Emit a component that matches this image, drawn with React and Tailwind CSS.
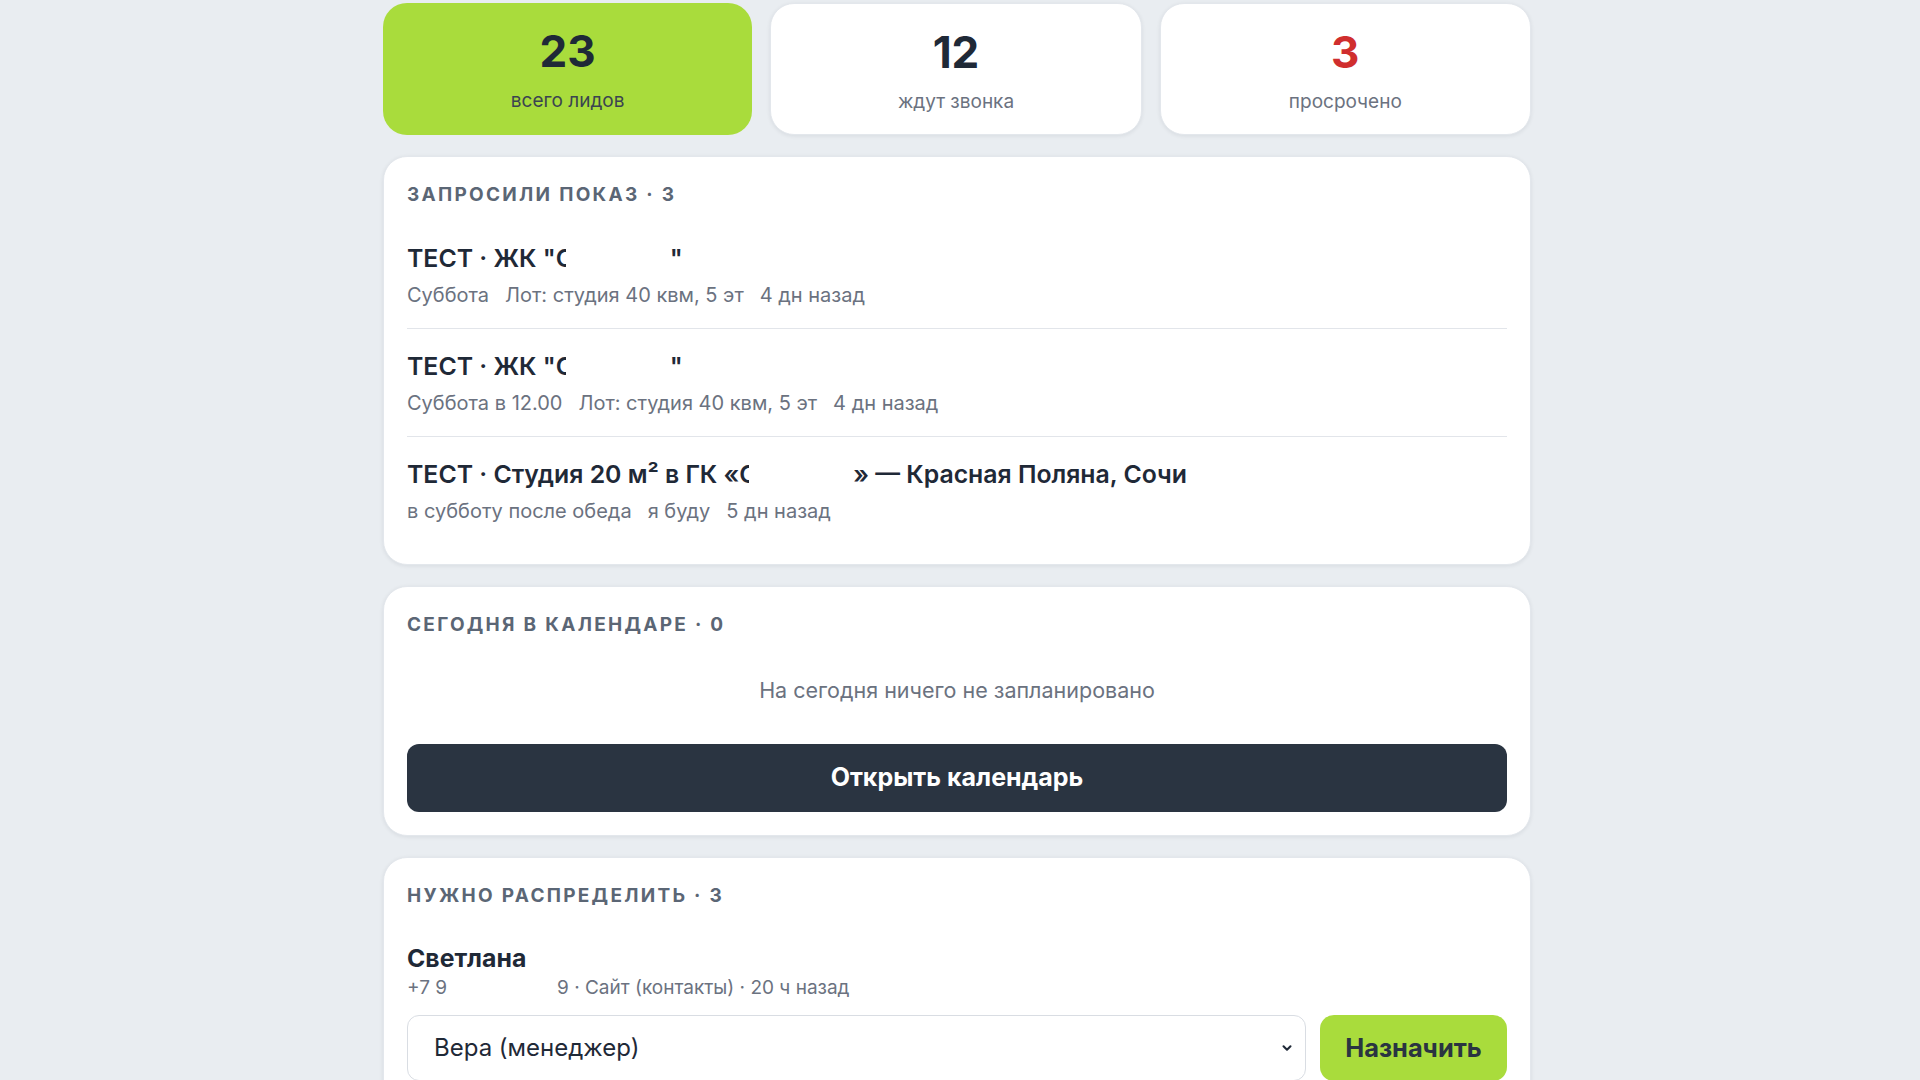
const stats = [
  { value: "23", label: "всего лидов", tone: "green" },
  { value: "12", label: "ждут звонка", tone: "plain" },
  { value: "3", label: "просрочено", tone: "alert" },
];

const showings = [
  {
    title: ["ТЕСТ · ЖК \"", "С", "\""],
    meta: ["Суббота", "Лот: студия 40 квм, 5 эт", "4 дн назад"],
  },
  {
    title: ["ТЕСТ · ЖК \"", "С", "\""],
    meta: ["Суббота в 12.00", "Лот: студия 40 квм, 5 эт", "4 дн назад"],
  },
  {
    title: ["ТЕСТ · Студия 20 м² в ГК «", "С", "» — Красная Поляна, Сочи"],
    meta: ["в субботу после обеда", "я буду", "5 дн назад"],
  },
];

// hidden part of a name / phone: first glyph half shown, then blank
function Masked({ head, tail }) {
  return (
    <>
      {head}
      <span className="inline-block w-[10px] overflow-hidden align-bottom">{tail}</span>
      <span className="inline-block w-[104px]"></span>
    </>
  );
}

function StatCard({ value, label, tone }) {
  const box =
    tone === "green"
      ? "bg-[#a9dc3c]"
      : "bg-white border border-[#e3e7ec] shadow-[0_1px_4px_rgba(15,23,42,0.08)]";
  const num = tone === "alert" ? "text-[#d02e2e]" : "text-[#1f2937]";
  const sub = tone === "green" ? "text-[#3b4450]" : "text-[#6b7280]";
  return (
    <div className={`flex-1 h-[132px] rounded-[24px] flex flex-col items-center pt-[22px] ${box}`}>
      <div className={`text-[44px] leading-[52px] font-bold ${num}`}>{value}</div>
      <div className={`text-[19px] leading-[28px] mt-[10px] ${sub}`}>{label}</div>
    </div>
  );
}

function Section({ title, children }) {
  return (
    <div className="bg-white rounded-[24px] border border-[#e3e7ec] shadow-[0_1px_4px_rgba(15,23,42,0.08)] px-[23px] pt-[26px] pb-[23px]">
      <h3 className="text-[19px] leading-[24px] font-bold uppercase tracking-[0.12em] text-[#5b6675]">
        {title}
      </h3>
      {children}
    </div>
  );
}

export default function App() {
  return (
    <div className="min-h-screen bg-[#e9edf1] font-['Inter',sans-serif] pt-[3px] pb-[40px]">
      <div className="ml-[383px] w-[1148px] flex flex-col gap-[21px]">
        {/* counters */}
        <div className="flex gap-[18px]">
          {stats.map((s) => (
            <StatCard key={s.label} {...s} />
          ))}
        </div>

        {/* showing requests */}
        <Section title="Запросили показ · 3">
          <div className="mt-[14px]">
            {showings.map((row, i) => (
              <div
                key={i}
                className={`pt-[19px] ${i < showings.length - 1 ? "pb-[17px] border-b border-[#e2e5ea]" : "pb-[14px]"}`}
              >
                <div className="text-[24.8px] leading-[36px] font-semibold text-[#1f2937]">
                  <Masked head={row.title[0]} tail={row.title[1]} />
                  {row.title[2]}
                </div>
                <div className="flex gap-[16px] mt-[3px] text-[20px] leading-[32px] text-[#6b7280]">
                  {row.meta.map((m) => (
                    <span key={m}>{m}</span>
                  ))}
                </div>
              </div>
            ))}
          </div>
        </Section>

        {/* today */}
        <Section title="Сегодня в календаре · 0">
          <p className="mt-[14px] py-[24px] text-center text-[21.5px] leading-[30px] text-[#6b7280]">
            На сегодня ничего не запланировано
          </p>
          <button className="mt-[15px] w-full h-[68px] rounded-[12px] bg-[#2a3441] text-white text-[25px] font-bold">
            Открыть календарь
          </button>
        </Section>

        {/* unassigned leads */}
        <Section title="Нужно распределить · 3">
          <div className="mt-[35px]">
            <div className="text-[24.8px] leading-[30px] font-bold text-[#1f2937]">Светлана</div>
            <div className="text-[19px] leading-[28px] mt-[1px] text-[#6b7280]">
              +7 9<span className="inline-block w-[110px]"></span>9 · Сайт (контакты) · 20 ч назад
            </div>
            <div className="mt-[13px] flex gap-[14px]">
              <div className="relative flex-1">
                <select className="w-full h-[66px] appearance-none rounded-[12px] border border-[#d9dde3] bg-white pl-[26px] pr-[40px] text-[24px] text-[#1f2937]">
                  <option>Вера (менеджер)</option>
                </select>
                <svg
                  className="absolute right-[12px] top-1/2 -translate-y-1/2 pointer-events-none"
                  width="14"
                  height="14"
                  viewBox="0 0 24 24"
                  fill="none"
                  stroke="#1f2937"
                  strokeWidth="3.5"
                  strokeLinecap="round"
                  strokeLinejoin="round"
                >
                  <path d="M6 9l6 6 6-6" />
                </svg>
              </div>
              <button className="w-[187px] h-[66px] rounded-[14px] bg-[#a9dc3c] text-[25.4px] font-bold text-[#2a3441]">
                Назначить
              </button>
            </div>
          </div>
        </Section>
      </div>
    </div>
  );
}
